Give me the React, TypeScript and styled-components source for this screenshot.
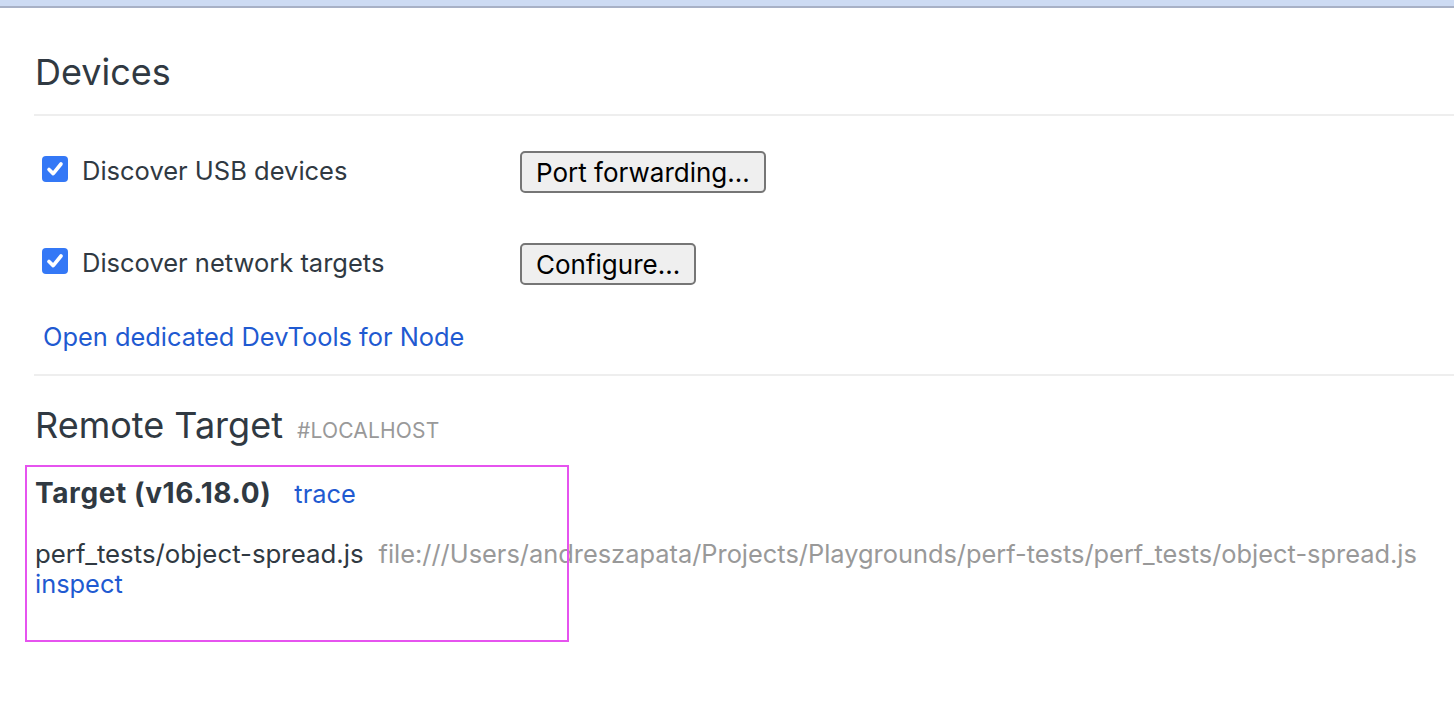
import styled, { createGlobalStyle } from 'styled-components'

const GlobalStyle = createGlobalStyle`
	html, body {
		margin: 0;
		padding: 0;
		background: #ffffff;
	}
	body {
		font-family: Inter, 'Liberation Sans', Arial, sans-serif;
		color: #303942;
	}
`

const Page = styled.div`
	position: relative;
	width: 1454px;
	min-height: 714px;
	overflow: hidden;
`

const TopBar = styled.div`
	height: 6px;
	background: #cddbf3;
	border-bottom: 2px solid #a8b1c6;
`

const Content = styled.main`
	padding: 0 0 0 34px;
`

const Heading = styled.h1`
	margin: 0;
	padding: 41px 0 0 1px;
	font-size: 36px;
	line-height: 46px;
	font-weight: 400;
	color: #303942;
	display: flex;
	align-items: baseline;
	gap: 14px;
`

const SubHeading = styled(Heading)`
	padding-top: 26px;
`

const HeadingTag = styled.span`
	font-size: 21px;
	color: #999999;
	text-transform: uppercase;
	letter-spacing: 0.2px;
`

const Rule = styled.hr`
	margin: 19px 0 0 0;
	border: 0;
	height: 2px;
	background: #eeeeee;
`

const Options = styled.div`
	display: flex;
	flex-direction: column;
	gap: 50px;
	padding: 35px 0 0 8px;
`

const OptionRow = styled.div`
	display: grid;
	grid-template-columns: 478px auto;
	align-items: center;
	height: 42px;
`

const CheckLabel = styled.label`
	display: flex;
	align-items: center;
	gap: 14px;
	font-size: 25.5px;
	color: #303942;
	margin-top: -4px;
`

const CheckBox = styled.span`
	width: 26px;
	height: 26px;
	margin-top: -3px;
	border-radius: 4px;
	background: #3478f6;
	display: flex;
	align-items: center;
	justify-content: center;
`

const Button = styled.button`
	justify-self: start;
	height: 42px;
	padding: 0 14px;
	font-family: Inter, 'Liberation Sans', Arial, sans-serif;
	font-size: 26px;
	color: #000000;
	background: #efefef;
	border: 2px solid #767676;
	border-radius: 5px;
`

const Link = styled.a`
	color: #1f5ad1;
	text-decoration: none;
	font-size: 25.4px;
	cursor: pointer;
`

const NodeLink = styled.div`
	padding: 37px 0 0 9px;
	line-height: 30px;
`

const TargetBlock = styled.section`
	padding: 24px 0 0 1px;
`

const TargetHeader = styled.div`
	display: flex;
	align-items: baseline;
	gap: 23px;
	line-height: 30px;
`

const TargetName = styled.span`
	font-size: 28px;
	font-weight: 700;
	letter-spacing: 0.6px;
	color: #303942;
`

const TargetItem = styled.div`
	padding-top: 30px;
	line-height: 30px;
	font-size: 25.4px;
`

const ItemLine = styled.div`
	display: flex;
	align-items: baseline;
	gap: 15px;
	white-space: nowrap;
`

const ItemName = styled.span`
	color: #303942;
	font-size: 25.8px;
`

const ItemUrl = styled.span`
	color: #999999;
`

const Highlight = styled.div`
	position: absolute;
	left: 25px;
	top: 465px;
	width: 540px;
	height: 173px;
	border: 2px solid #e653ef;
	pointer-events: none;
`

const Check = () => (
	<CheckBox>
		<svg width='22' height='22' viewBox='0 0 22 22'>
			<path d='M5 11.5 L9.2 15.6 L17 6' fill='none' stroke='#fff' strokeWidth='3.6' strokeLinecap='round' strokeLinejoin='round' />
		</svg>
	</CheckBox>
)

const App = () => {
	return (
		<Page>
			<GlobalStyle />
			<TopBar />
			<Content>
				<Heading>Devices</Heading>
				<Rule />
				<Options>
					<OptionRow>
						<CheckLabel>
							<Check />
							Discover USB devices
						</CheckLabel>
						<Button>Port forwarding...</Button>
					</OptionRow>
					<OptionRow>
						<CheckLabel>
							<Check />
							Discover network targets
						</CheckLabel>
						<Button>Configure...</Button>
					</OptionRow>
				</Options>
				<NodeLink>
					<Link>Open dedicated DevTools for Node</Link>
				</NodeLink>
				<Rule />
				<SubHeading>
					Remote Target
					<HeadingTag>#localhost</HeadingTag>
				</SubHeading>
				<TargetBlock>
					<TargetHeader>
						<TargetName>Target (v16.18.0)</TargetName>
						<Link>trace</Link>
					</TargetHeader>
					<TargetItem>
						<ItemLine>
							<ItemName>perf_tests/object-spread.js</ItemName>
							<ItemUrl>file:///Users/andreszapata/Projects/Playgrounds/perf-tests/perf_tests/object-spread.js</ItemUrl>
						</ItemLine>
						<Link>inspect</Link>
					</TargetItem>
				</TargetBlock>
			</Content>
			<Highlight />
		</Page>
	)
}

export default App
